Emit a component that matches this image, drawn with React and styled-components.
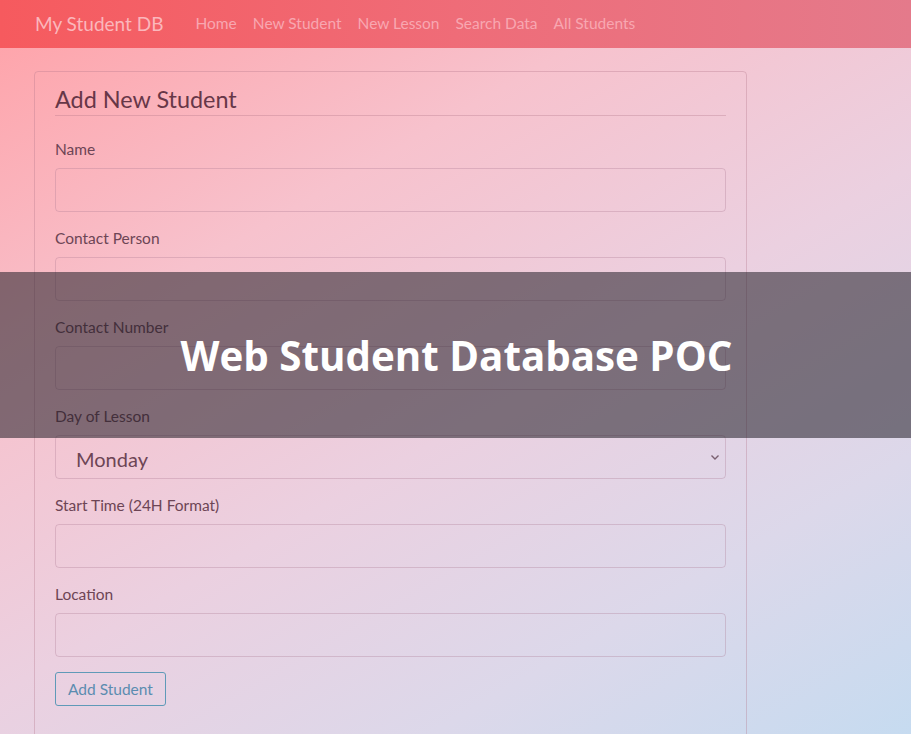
import React from 'react'
import styled, { createGlobalStyle } from 'styled-components'

const GlobalStyle = createGlobalStyle`
  html, body {
    margin: 0;
    padding: 0;
  }
  body {
    min-height: 100vh;
    background: linear-gradient(150deg, #ffa1a7 0%, #f7c2cd 30%, #ebd0e0 55%, #dcd8ea 78%, #c6dbf0 100%);
    font-family: Lato, "Open Sans", sans-serif;
    color: #6d4555;
    overflow: hidden;
  }
`

const Page = styled.div`
  position: relative;
  height: 734px;
`

const Navbar = styled.nav`
  display: flex;
  align-items: center;
  height: 48px;
  padding: 0 35px 2px;
  background: linear-gradient(90deg, #f65a5e 0%, #ef6c78 50%, #e47a8b 100%);
  box-sizing: border-box;
`

const Brand = styled.span`
  font-size: 19px;
  color: #fbb7bc;
  margin-right: 32px;
`

const NavLinks = styled.div`
  display: flex;
  gap: 16px;
`

const NavLink = styled.a`
  font-size: 15.5px;
  color: #f8a7b1;
  text-decoration: none;
`

const Container = styled.main`
  padding: 23px 0 0 34px;
`

const Card = styled.section`
  width: 713px;
  box-sizing: border-box;
  border: 1px solid rgba(180, 120, 140, 0.35);
  border-radius: 4px;
  padding: 13px 20px 40px;
`

const Heading = styled.h2`
  margin: 0 0 23px;
  font-size: 23.4px;
  font-weight: 400;
  color: #673748;
  padding-bottom: 2px;
  border-bottom: 1px solid rgba(170, 110, 130, 0.3);
`

const Group = styled.div`
  display: flex;
  flex-direction: column;
  margin-bottom: 16px;
`

const Label = styled.label`
  font-size: 15.5px;
  line-height: 20px;
  margin-bottom: 9px;
  color: #6d4555;
`

const Field = styled.input`
  height: 44px;
  box-sizing: border-box;
  background: transparent;
  border: 1px solid rgba(170, 120, 145, 0.32);
  border-radius: 4px;
  padding: 0 20px;
  font-family: inherit;
  font-size: 20px;
  color: #6d4555;
`

const SelectWrap = styled.div`
  position: relative;
  height: 44px;
  box-sizing: border-box;
  border: 1px solid rgba(170, 120, 145, 0.32);
  border-radius: 4px;
  display: flex;
  align-items: center;
  padding: 4px 20px 0;
  font-size: 20px;
  color: #6d4555;
`

const Chevron = styled.svg`
  position: absolute;
  right: 5px;
  top: 17px;
`

const Button = styled.button`
  align-self: flex-start;
  height: 34px;
  padding: 0 12px;
  background: transparent;
  border: 1px solid #5f9ab8;
  border-radius: 3px;
  font-family: inherit;
  font-size: 15.5px;
  color: #5b8cb0;
  margin-top: -1px;
`

const Banner = styled.div`
  position: absolute;
  left: 0;
  right: 0;
  top: 272px;
  height: 166px;
  background: rgba(32, 30, 38, 0.55);
  display: flex;
  align-items: center;
  justify-content: center;
`

const BannerTitle = styled.h1`
  margin: 0 0 0 2px;
  font-family: "Open Sans", sans-serif;
  font-weight: 700;
  font-size: 40.3px;
  color: #ffffff;
`

const fields = ['Name', 'Contact Person', 'Contact Number']
const fields2 = ['Start Time (24H Format)', 'Location']

export default function App() {
  return (
    <Page>
      <GlobalStyle />
      <Navbar>
        <Brand>My Student DB</Brand>
        <NavLinks>
          {['Home', 'New Student', 'New Lesson', 'Search Data', 'All Students'].map((l) => (
            <NavLink key={l}>{l}</NavLink>
          ))}
        </NavLinks>
      </Navbar>
      <Container>
        <Card>
          <Heading>Add New Student</Heading>
          {fields.map((f) => (
            <Group key={f}>
              <Label>{f}</Label>
              <Field />
            </Group>
          ))}
          <Group>
            <Label>Day of Lesson</Label>
            <SelectWrap>
              Monday
              <Chevron width="10" height="8" viewBox="0 0 10 8">
                <path d="M1.5 2.5 L5 6 L8.5 2.5" fill="none" stroke="#7a6070" strokeWidth="1.4" />
              </Chevron>
            </SelectWrap>
          </Group>
          {fields2.map((f) => (
            <Group key={f}>
              <Label>{f}</Label>
              <Field />
            </Group>
          ))}
          <Button>Add Student</Button>
        </Card>
      </Container>
      <Banner>
        <BannerTitle>Web Student Database POC</BannerTitle>
      </Banner>
    </Page>
  )
}
